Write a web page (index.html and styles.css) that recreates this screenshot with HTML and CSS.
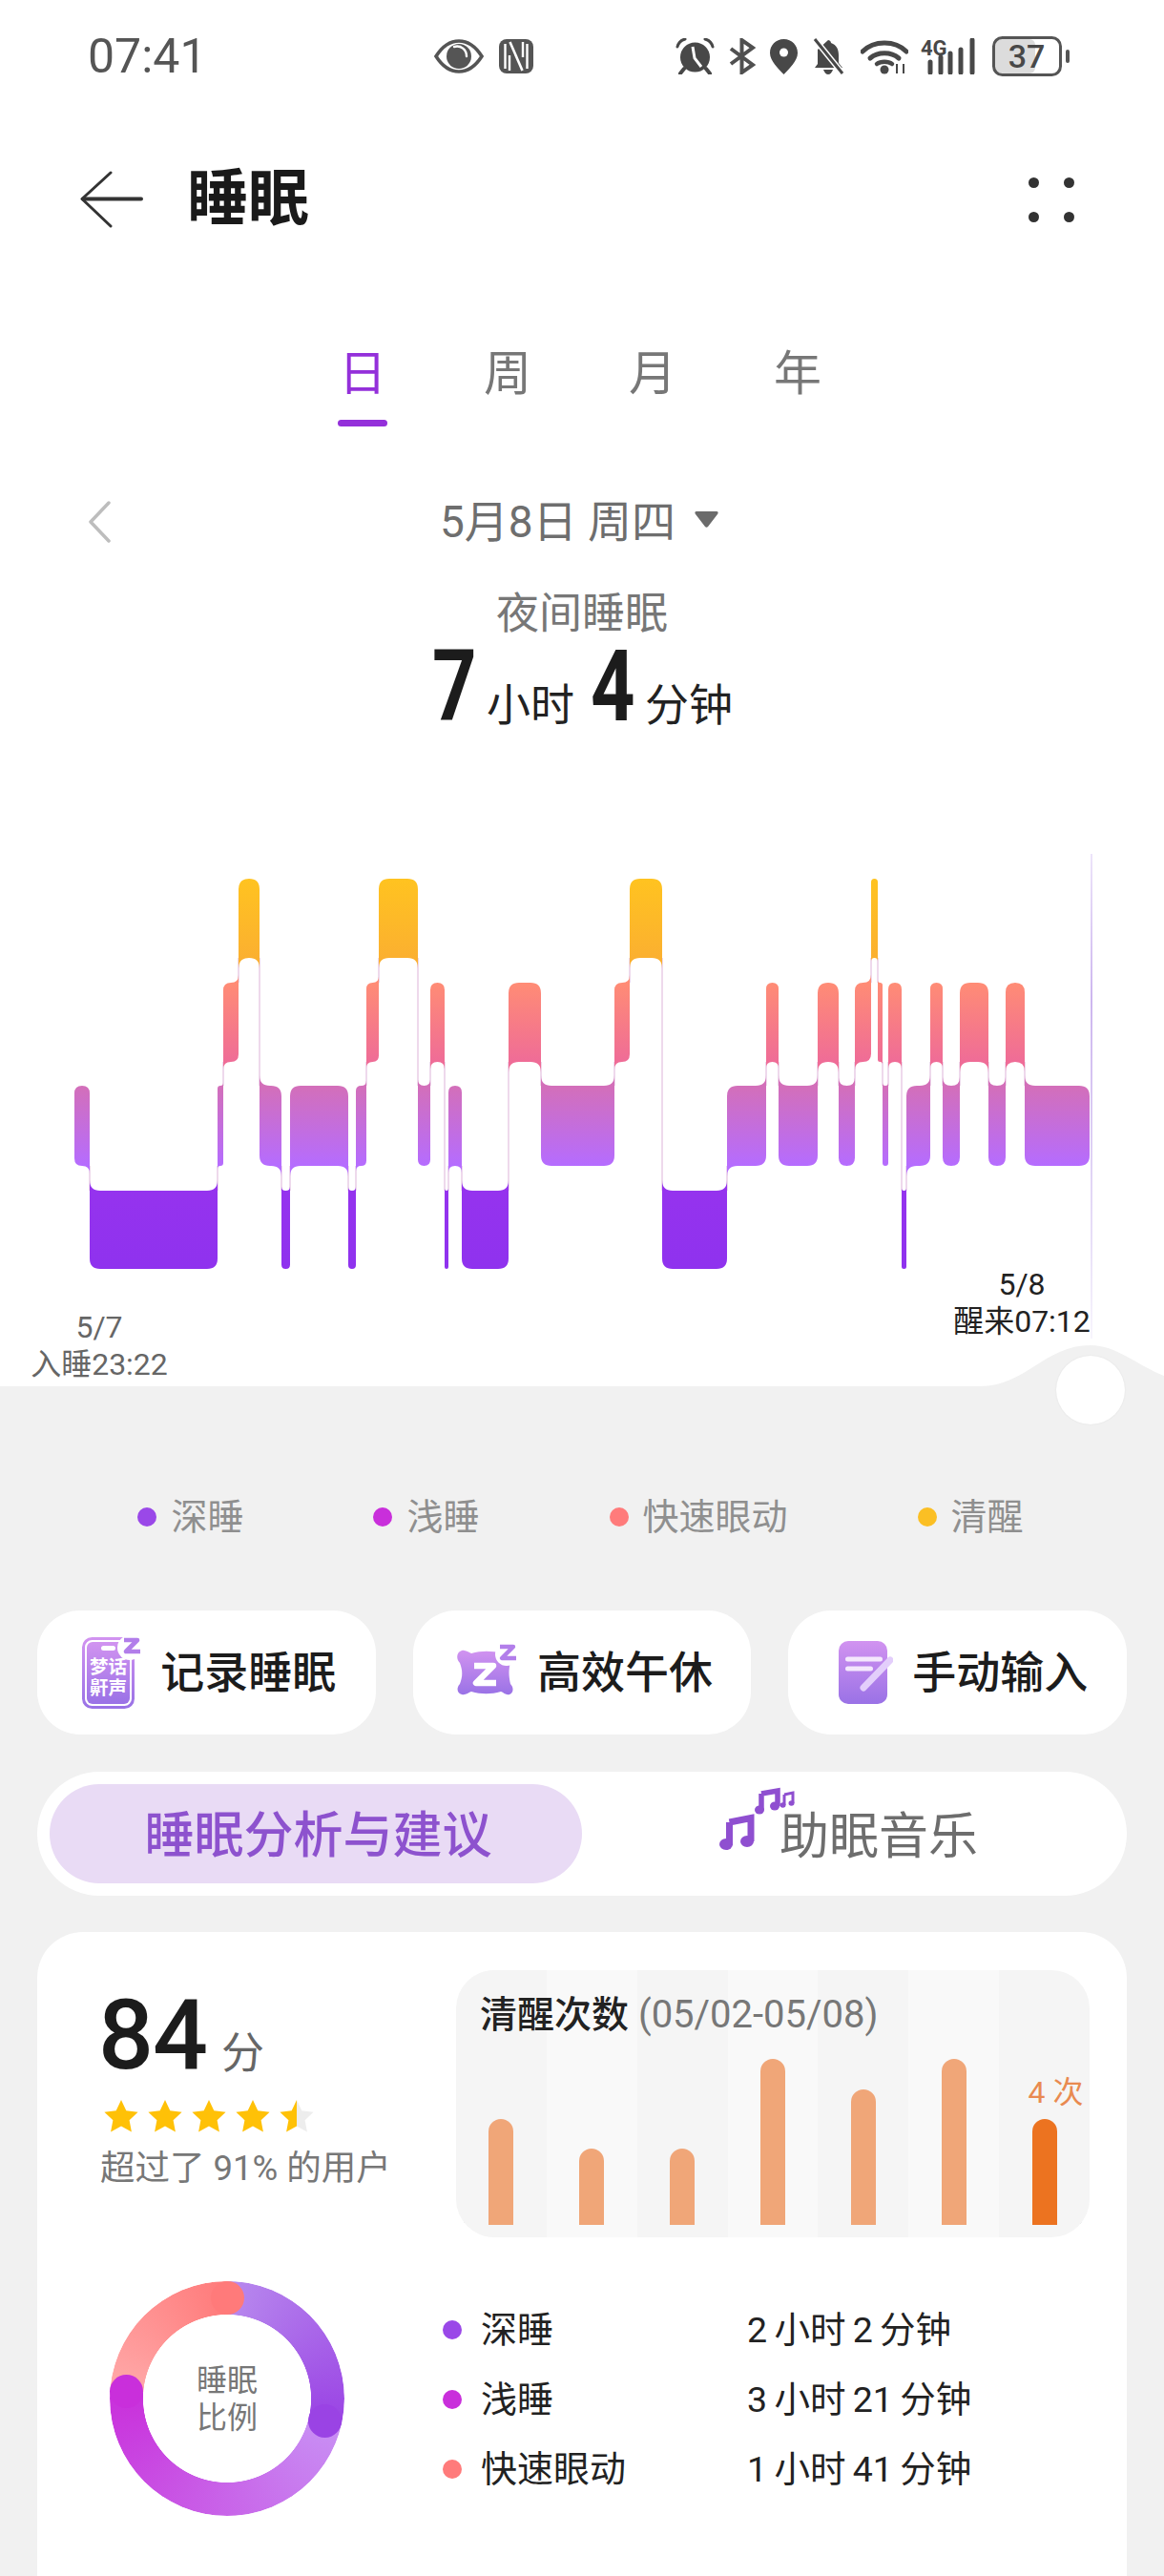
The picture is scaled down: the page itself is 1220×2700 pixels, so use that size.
FILE: index.html
```html
<!DOCTYPE html>
<html lang="zh-CN">
<head>
<meta charset="utf-8">
<title>睡眠</title>
<link rel="stylesheet" href="styles.css">
</head>
<body>
<div class="page">
  <section class="hero">
    <header class="statusbar">
      <span class="clock">07:41</span>
      <div class="status-mid">
        <svg class="ico" width="52" height="36" viewBox="0 0 52 36"><path d="M2 18C9 7 17 2 26 2s17 5 24 16c-7 11-15 16-24 16S9 29 2 18Z" fill="none" stroke="#555" stroke-width="3.6"/><circle cx="26" cy="18" r="13" fill="#555"/><path d="M21 8c7-2 13 3 13 10" fill="none" stroke="#fff" stroke-width="2.4" stroke-linecap="round"/></svg>
        <svg class="ico" width="36" height="36" viewBox="0 0 36 36"><rect x="0" y="0" width="36" height="36" rx="8" fill="#555"/><path d="M6.500 5v26M29.500 5v26" stroke="#fff" stroke-width="2.400"/><path d="M11.500 3 24.500 33" stroke="#fff" stroke-width="2.600"/><path d="M11 17v16M25 3v16" stroke="#fff" stroke-width="2.400"/></svg>
      </div>
      <div class="status-right">
        <svg class="ico" width="41" height="38" viewBox="0 0 41 38"><circle cx="20.500" cy="20" r="15.500" fill="#484848"/><path d="M18 9l2 12 7 9" fill="none" stroke="#fff" stroke-width="3"/><path d="M2 9c1-4 4-7 8-8M39 9c-1-4-4-7-8-8" fill="none" stroke="#484848" stroke-width="3" stroke-linecap="round"/><path d="M9 32l-4 5M32 32l4 5" stroke="#484848" stroke-width="4" stroke-linecap="round"/></svg>
        <svg class="ico" width="29" height="38" viewBox="0 0 29 38"><path d="M3 11l23 17-11.500 8V2L26 10 3 27" fill="none" stroke="#505050" stroke-width="4"/></svg>
        <svg class="ico" width="31" height="38" viewBox="0 0 31 38"><path d="M15.500 1C7 1 1 7.500 1 15.500 1 24 10 32 15.500 38 21 32 30 24 30 15.500 30 7.500 24 1 15.500 1Z" fill="#484848"/><circle cx="15.500" cy="15" r="4.500" fill="#fff"/></svg>
        <svg class="ico" width="35" height="38" viewBox="0 0 35 38"><path d="M17 2c1 0 3 1 3 3 6 2 8 7 8 13v8l4 5H3l3-4V12Z" fill="#484848"/><path d="M3 1l29 36" stroke="#fff" stroke-width="6"/><path d="M3 1l29 36" stroke="#484848" stroke-width="3"/><path d="M12 33h10c-1 3-3 5-5 5s-4-2-5-5Z" fill="#484848"/></svg>
        <svg class="ico ico-wifi" width="50" height="38" viewBox="0 0 50 38"><path d="M2 14C14 2 36 2 48 14" fill="none" stroke="#484848" stroke-width="5" stroke-linecap="round"/><path d="M10 21c8-7 22-7 30 0" fill="none" stroke="#484848" stroke-width="5" stroke-linecap="round"/><path d="M17 27c4-3 12-3 16 0" fill="none" stroke="#484848" stroke-width="4.500" stroke-linecap="round"/><circle cx="25" cy="33" r="4.500" fill="#484848"/><path d="M38 27v10M45 27v10" stroke="#484848" stroke-width="2"/></svg>
        <svg class="ico signal" width="60" height="38" viewBox="0 0 60 38"><text x="0" y="18" class="four-g">4G</text><path d="M10 25v11M21 20v16M31 16v20M42 12v24M54 2v34" stroke="#484848" stroke-width="5" stroke-linecap="round"/></svg>
        <svg class="ico" width="82" height="42" viewBox="0 0 82 42"><rect x="3" y="3" width="42" height="36" rx="6" fill="#dcdcdc"/><rect x="1.500" y="1.500" width="70" height="39" rx="9" fill="none" stroke="#555" stroke-width="3"/><text x="36" y="33" text-anchor="middle" class="batt">37</text><rect x="77" y="14" width="4" height="14" rx="2" fill="#555"/></svg>
      </div>
    </header>

    <nav class="navbar">
      <svg class="back" width="66" height="60" viewBox="0 0 66 60"><path d="M32 2 2 29.500 32 58" fill="none" stroke="#333" stroke-width="3" stroke-linecap="round" stroke-linejoin="round"/><path d="M3 29.500h61" stroke="#333" stroke-width="4" stroke-linecap="round"/></svg>
      <h1 class="title">睡眠</h1>
      <div class="more"><i></i><i></i><i></i><i></i></div>
    </nav>

    <div class="tabs">
      <span class="tab is-active">日</span>
      <span class="tab">周</span>
      <span class="tab">月</span>
      <span class="tab">年</span>
    </div>

    <div class="date-row">
      <svg class="prev" width="24" height="44" viewBox="0 0 24 44"><path d="M22 2 3 22l19 20" fill="none" stroke="#bdbdbd" stroke-width="3.500" stroke-linecap="round" stroke-linejoin="round"/></svg>
      <span class="date">5月8日 周四</span>
      <svg class="caret" width="25" height="17" viewBox="0 0 25 17"><path d="M2 0h21c2 0 2 2 1 3L14 16c-1 1-2 1-3 0L1 3C0 2 0 0 2 0Z" fill="#6b6b6b"/></svg>
    </div>

    <div class="night-label">夜间睡眠</div>
    <div class="night-total"><b class="big">7</b><span class="unit">小时</span><b class="big">4</b><span class="unit">分钟</span></div>

    <div class="hypno">
      <svg id="hypno-svg" width="1220" height="520" viewBox="0 890 1220 520"></svg>
      <div class="mark mark-start">5/7<br>入睡23:22</div>
      <div class="mark mark-end">5/8<br>醒来07:12</div>
    </div>

    <svg class="bump" width="1220" height="46" viewBox="0 1408 1220 46"><path d="M0 1453H1027C1075 1453 1095 1410 1143 1410C1170 1410 1190 1430 1220 1442V1454H0Z" fill="#f1f1f1"/></svg>
    <div class="knob"></div>
  </section>

  <main class="body">
    <div class="legend">
      <span class="legend-item"><i class="dot dot-deep"></i>深睡</span>
      <span class="legend-item"><i class="dot dot-light"></i>浅睡</span>
      <span class="legend-item"><i class="dot dot-rem"></i>快速眼动</span>
      <span class="legend-item"><i class="dot dot-wake"></i>清醒</span>
    </div>

    <div class="actions">
      <div class="action">
        <svg class="action-ico" width="62" height="75" viewBox="0 0 62 75">
          <defs><linearGradient id="ig1" x1="0" y1="0" x2="0" y2="1"><stop offset="0" stop-color="#D193F0"/><stop offset="1" stop-color="#9A72E6"/></linearGradient></defs>
          <rect x="1.500" y="1.500" width="52" height="72" rx="9" fill="none" stroke="url(#ig1)" stroke-width="3"/>
          <rect x="5" y="5" width="45" height="65" rx="6" fill="url(#ig1)"/>
          <rect x="20" y="9" width="15" height="5" rx="2.500" fill="#fff"/>
          <circle cx="50" cy="11" r="13" fill="#fff"/>
          <path d="M44 3h14L46 15h15" fill="none" stroke="#B27EEA" stroke-width="4.600" stroke-linejoin="round"/>
          <text class="ico-text" text-anchor="middle"><tspan x="27.500" y="38">梦话</tspan><tspan x="27.500" y="60">鼾声</tspan></text>
        </svg>
        <span class="action-text">记录睡眠</span>
      </div>
      <div class="action">
        <svg class="action-ico" width="66" height="60" viewBox="0 0 66 60">
          <defs><linearGradient id="ig2" x1="0" y1="0" x2="0" y2="1"><stop offset="0" stop-color="#D193F0"/><stop offset="1" stop-color="#9A72E6"/></linearGradient></defs>
          <path d="M8 7c4-1 7 2 10 3 10-3 22-3 32 0 3-1 5-3 8-2 4 2 5 7 1 11-2 8-2 14 0 23 4 4 3 10-1 11-4 1-6-2-9-3-10 3-21 3-31 0-3 1-6 4-10 3-5-1-6-7-2-11 3-8 3-14 0-22-4-4-4-11 2-13Z" fill="url(#ig2)"/>
          <path d="M21 23h20L23 41h21" fill="none" stroke="#fff" stroke-width="6.500" stroke-linejoin="round"/>
          <circle cx="55" cy="11" r="12" fill="#fff"/>
          <path d="M48 3h14L50 15h15" fill="none" stroke="#B27EEA" stroke-width="4.400" stroke-linejoin="round"/>
        </svg>
        <span class="action-text">高效午休</span>
      </div>
      <div class="action">
        <svg class="action-ico" width="57" height="66" viewBox="0 0 57 66">
          <defs><linearGradient id="ig3" x1="0" y1="0" x2="0" y2="1"><stop offset="0" stop-color="#D193F0"/><stop offset="1" stop-color="#9A72E6"/></linearGradient></defs>
          <rect x="0" y="0" width="51" height="66" rx="10" fill="url(#ig3)"/>
          <path d="M9.500 19h34M9.500 29h24" stroke="#F4E8FD" stroke-width="5" stroke-linecap="round"/>
          <path d="M26 49 54 20" stroke="#E3CEFB" stroke-width="7" stroke-linecap="round"/>
        </svg>
        <span class="action-text">手动输入</span>
      </div>
    </div>

    <div class="switch">
      <div class="switch-on">睡眠分析与建议</div>
      <div class="switch-off">
        <svg class="music" width="80" height="68" viewBox="0 0 80 68">
          <path d="M10.500 39 33 34.500V59M10.500 39V63" fill="none" stroke="#8F4FD0" stroke-width="7"/>
          <ellipse cx="7" cy="62" rx="7" ry="6" fill="#8F4FD0"/>
          <ellipse cx="29" cy="59" rx="7" ry="6" fill="#8F4FD0"/>
          <path d="M44 9 61 6V22M44 9V26" fill="none" stroke="#8F4FD0" stroke-width="5.500"/>
          <ellipse cx="42" cy="26" rx="5" ry="4.500" fill="#8F4FD0"/>
          <ellipse cx="58" cy="22" rx="5" ry="4.500" fill="#8F4FD0"/>
          <path d="M68 10 77 8V19M68 10V21" fill="none" stroke="#8F4FD0" stroke-width="3"/>
          <ellipse cx="66.500" cy="21" rx="3" ry="2.700" fill="#8F4FD0"/>
          <ellipse cx="75.500" cy="19" rx="3" ry="2.700" fill="#8F4FD0"/>
        </svg>
        <span>助眠音乐</span>
      </div>
    </div>

    <article class="card">
      <div class="card-top">
        <div class="score">
          <div class="score-line"><b class="score-num">84</b><span class="score-unit">分</span></div>
          <svg class="stars" width="222" height="34" viewBox="0 0 222 34">
            <defs>
              <path id="star" d="M18 0l5.300 11.200 12.300 1.500-9 8.500 2.300 12.200L18 27.400 7.100 33.400 9.400 21.200l-9-8.500 12.300-1.500Z"/>
              <linearGradient id="half"><stop offset=".5" stop-color="#FFC107"/><stop offset=".5" stop-color="#EDEDED"/></linearGradient>
            </defs>
            <use href="#star" fill="#FFC107"/>
            <use href="#star" x="46" fill="#FFC107"/>
            <use href="#star" x="92" fill="#FFC107"/>
            <use href="#star" x="138" fill="#FFC107"/>
            <use href="#star" x="184" fill="url(#half)"/>
          </svg>
          <p class="score-note">超过了 91% 的用户</p>
        </div>
        <div class="wakes">
          <div class="wakes-title"><b>清醒次数</b> <span>(05/02-05/08)</span></div>
          <div class="wakes-base"></div>
          <div class="wakes-col"><i class="bar" style="height:111px"></i></div>
          <div class="wakes-col"><i class="bar" style="height:80px"></i></div>
          <div class="wakes-col"><i class="bar" style="height:80px"></i></div>
          <div class="wakes-col"><i class="bar" style="height:174px"></i></div>
          <div class="wakes-col"><i class="bar" style="height:142px"></i></div>
          <div class="wakes-col"><i class="bar" style="height:174px"></i></div>
          <div class="wakes-col"><em class="wakes-now">4 次</em><i class="bar bar-now" style="height:111px"></i></div>
        </div>
      </div>
      <div class="card-bottom">
        <div class="donut-wrap">
          <div class="donut"></div>
          <i class="cap cap-rem"></i>
          <i class="cap cap-deep"></i>
          <i class="cap cap-light"></i>
          <div class="donut-text">睡眠<br>比例</div>
        </div>
        <ul class="stages">
          <li><i class="dot dot-deep"></i><span class="stage-name">深睡</span><span class="stage-time">2 小时 2 分钟</span></li>
          <li><i class="dot dot-light"></i><span class="stage-name">浅睡</span><span class="stage-time">3 小时 21 分钟</span></li>
          <li><i class="dot dot-rem"></i><span class="stage-name">快速眼动</span><span class="stage-time">1 小时 41 分钟</span></li>
        </ul>
      </div>
    </article>
  </main>
</div>
<script src="chart.js"></script>
</body>
</html>
```

FILE: styles.css
```css
* { box-sizing: border-box; }
html, body { margin: 0; padding: 0; background: #f1f1f1; }
body { font-family: Roboto, "Noto Sans CJK SC", sans-serif; color: #1c1c1c; }
.page { width: 1220px; height: 2700px; overflow: hidden; }
p, h1, ul { margin: 0; padding: 0; }
i, em { font-style: normal; }

.hero { position: relative; height: 1454px; background: #fff; }

.statusbar { height: 118px; padding: 0 0 0 92px; display: flex; align-items: center; }
.clock { width: 363px; font-size: 50px; line-height: 1; color: #555; letter-spacing: 0; }
.status-mid { display: flex; gap: 16px; width: 253px; align-items: center; }
.status-right { display: flex; align-items: center; gap: 14px; }
.ico { display: block; }
.ico-wifi { margin-left: 2px; }
.signal { margin-left: -1px; margin-right: 1px; }
.four-g { font: 700 22px Roboto, sans-serif; fill: #484848; }
.batt { font: 500 34px Roboto, sans-serif; fill: #484848; }

.navbar { position: relative; height: 120px; margin-top: 31px; padding: 0 84px; display: flex; align-items: center; }
.back { display: block; }
.title { margin-left: 46px; font-size: 64px; line-height: 1; font-weight: 700; color: #1a1a1a; letter-spacing: 0; }
.more { margin-left: auto; margin-right: 10px; width: 48px; display: grid; grid-template-columns: 11px 11px; justify-content: space-between; row-gap: 25px; }
.more i { height: 11px; border-radius: 50%; background: #333; }

.tabs { height: 97px; margin-top: 81px; display: flex; justify-content: center; transform: translateX(-2px); }
.tab { position: relative; width: 152px; text-align: center; font-size: 50px; line-height: 84px; color: #777; }
.tab.is-active { color: #9430DA; }
.tab.is-active::after { content: ""; position: absolute; left: 50%; bottom: 0; width: 52px; height: 7px; margin-left: -26px; border-radius: 4px; background: #9430DA; }

.date-row { position: relative; height: 50px; margin-top: 75px; display: flex; align-items: center; justify-content: center; padding-right: 6px; gap: 20px; }
.prev { position: absolute; left: 92px; top: 3px; }
.date { font-size: 46px; line-height: 50px; color: #6e6e6e; }
.caret { margin-top: -6px; }

.night-label { margin-top: 42px; height: 60px; text-align: center; font-size: 45px; line-height: 60px; color: #777; }
.night-total { height: 90px; margin-top: 1px; display: flex; align-items: baseline; justify-content: center; padding-left: 8px; line-height: 90px; }
.big { display: inline-block; font-size: 104px; font-weight: 700; color: #1c1c1c; transform: scaleX(.78); width: 46px; text-align: center; }
.unit { font-size: 46px; margin: 0 12px 0 16px; color: #222; }

.hypno { position: absolute; left: 0; top: 890px; width: 1220px; height: 520px; }
#hypno-svg { display: block; }
.mark { position: absolute; width: 180px; text-align: center; font-size: 32px; line-height: 39px; }
.mark-start { left: 14px; top: 482px; color: #666; }
.mark-end { left: 981px; top: 437px; color: #222; }

.bump { position: absolute; left: 0; bottom: 0; display: block; }
.knob { position: absolute; left: 1107px; top: 1421px; width: 72px; height: 72px; border-radius: 50%; background: #fff; box-shadow: 0 0 2px rgba(0,0,0,.08); z-index: 2; }

.body { padding: 111px 39px 0; }
.legend { height: 50px; display: flex; justify-content: center; gap: 136px; padding-right: 3px; }
.legend-item { display: flex; align-items: center; gap: 15px; font-size: 38px; line-height: 50px; color: #8f8f8f; }
.dot { flex: none; display: block; width: 20px; height: 20px; border-radius: 50%; }
.dot-deep { background: #9A48E8; }
.dot-light { background: #C92FDB; }
.dot-rem { background: #FF7B7B; }
.dot-wake { background: #FBBF24; }

.actions { margin-top: 73px; display: grid; grid-template-columns: repeat(3, 1fr); gap: 39px; }
.action { height: 130px; border-radius: 45px; background: #fff; display: flex; align-items: center; justify-content: center; gap: 20px; padding-left: 6px; }
.action:nth-child(2) { padding-left: 3px; gap: 21px; }
.action:nth-child(3) { padding-left: 12px; }
.action-ico { display: block; flex: none; }
.ico-text { font: 700 19.500px "Noto Sans CJK SC", sans-serif; fill: #fff; }
.action-text { font-size: 46px; line-height: 60px; font-weight: 500; color: #1c1c1c; }

.switch { margin-top: 39px; height: 130px; border-radius: 65px; background: #fff; padding: 13px; display: flex; }
.switch-on { width: 558px; height: 104px; border-radius: 52px; background: #E9DBF5; padding-left: 5px; text-align: center; font-size: 52px; line-height: 110px; font-weight: 500; color: #8D52CE; }
.switch-off { position: relative; flex: 1; display: flex; align-items: center; padding-left: 207px; padding-top: 8px; font-size: 52px; line-height: 102px; color: #6d6d6d; }
.music { position: absolute; left: 144px; top: 1px; display: block; }

.card { margin-top: 38px; height: 800px; border-radius: 48px; background: #fff; padding: 40px 39px 0 69px; }
.card-top { display: flex; height: 280px; justify-content: space-between; }
.score { width: 330px; }
.score-line { height: 110px; margin-left: -5px; padding-top: 13px; display: flex; align-items: baseline; line-height: 110px; }
.score-num { font-size: 102px; font-weight: 500; color: #1c1c1c; letter-spacing: -1px; }
.score-unit { margin-left: 15px; font-size: 45px; color: #666; }
.stars { display: block; margin: 26px 0 0 1px; }
.score-note { margin-top: 16px; font-size: 36.500px; line-height: 44px; color: #777; white-space: nowrap; margin-left: -3px; }

.wakes { position: relative; width: 664px; height: 280px; border-radius: 40px; overflow: hidden; display: grid; grid-template-columns: repeat(7, 1fr); }
.wakes-title { position: absolute; left: 25px; top: 24px; font-size: 40px; line-height: 46px; color: #777; white-space: nowrap; z-index: 1; }
.wakes-title b { font-size: 39px; font-weight: 500; color: #222; }
.wakes-base { position: absolute; left: 7px; right: 8px; top: 264px; border-top: 2px dotted #cfcfcf; }
.wakes-col { position: relative; display: flex; flex-direction: column; align-items: center; justify-content: flex-end; padding-bottom: 13px; background: #f5f5f5; }
.wakes-col:nth-of-type(even) { background: #f9f9f9; }
.bar { display: block; width: 26px; border-radius: 13px 13px 0 0; background: #F0A678; }
.bar-now { background: #EC7320; }
.wakes-now { margin-bottom: 9px; margin-left: 24px; font-size: 32px; line-height: 38px; color: #E98A50; white-space: nowrap; }

.card-bottom { display: flex; margin-top: 46px; margin-left: 7px; }
.donut-wrap { position: relative; flex: none; width: 246px; height: 246px; }
.donut { width: 246px; height: 246px; border-radius: 50%; background: conic-gradient(#B88AEE 0deg, #9A43E4 103deg, #C890F4 103deg, #C92FDB 274deg, #FFA9A9 274deg, #FF7A7A 360deg); -webkit-mask: radial-gradient(closest-side, transparent 71.3%, #000 71.8%); mask: radial-gradient(closest-side, transparent 71.3%, #000 71.8%); }
.cap { position: absolute; width: 35px; height: 35px; margin: -17.500px 0 0 -17.500px; border-radius: 50%; }
.cap-rem { left: 123px; top: 17.500px; background: #FF7A7A; }
.cap-deep { left: 225.800px; top: 146.700px; background: #9A43E4; }
.cap-light { left: 17.800px; top: 115.600px; background: #C92FDB; }
.donut-text { position: absolute; inset: 2px 0 0; display: flex; align-items: center; justify-content: center; text-align: center; font-size: 32px; line-height: 39px; color: #777; }

.stages { list-style: none; margin-left: 103px; padding-top: 14px; }
.stages li { height: 73px; display: flex; align-items: center; font-size: 38px; line-height: 46px; color: #222; white-space: nowrap; }
.stages .dot { margin-right: 20px; }
.stage-name { width: 279px; }
.stage-time { word-spacing: -2px; font-size: 37.500px; }
```

FILE: chart.js
```js
// Sleep stages across the night: [stage, x start, x end]. 0 deep, 1 light, 2 REM, 3 awake.
var SEGMENTS = [
  [1,78,94],[0,94,228],[1,228,234],[2,234,250],[3,250,272],[1,272,295],[0,295,304],[1,304,365],
  [0,365,373],[1,373,384],[2,384,397],[3,397,438],[1,438,451],[2,451,466],[0,466,470],[1,470,484],
  [0,484,533],[2,533,567],[1,567,644],[2,644,660],[3,660,694],[0,694,762],[1,762,803],[2,803,816],
  [1,816,857],[2,857,879],[1,879,896],[2,896,913],[3,913,920],[2,920,925],[1,925,931],[2,931,945],
  [0,945,950],[1,950,975],[2,975,988],[1,988,1006],[2,1006,1036],[1,1036,1054],[2,1054,1074],[1,1074,1142]
];
var BANDS = [
  { top: 1248, bottom: 1330, from: "#9533EE", to: "#8F32EE" },
  { top: 1138, bottom: 1222, from: "#D36FB9", to: "#B56CFF" },
  { top: 1030, bottom: 1113, from: "#FF8C75", to: "#EF6C97" },
  { top: 921,  bottom: 1004, from: "#FFC320", to: "#FBB030" }
];

function segmentPath(i) {
  var s = SEGMENTS[i], prev = SEGMENTS[i - 1], next = SEGMENTS[i + 1];
  var b = BANDS[s[0]], x0 = s[1], x1 = s[2], t = b.top, y = b.bottom;
  var w = x1 - x0, r = Math.min(11, w / 2), f = Math.min(11, w / 2);
  var prevHigh = prev && prev[0] > s[0], prevLow = prev && prev[0] < s[0];
  var nextHigh = next && next[0] > s[0], nextLow = next && next[0] < s[0];
  var d = "";
  d += prevHigh ? "M" + x0 + " " + (t - f) + "Q" + x0 + " " + t + " " + (x0 + f) + " " + t
                : "M" + x0 + " " + (t + r) + "Q" + x0 + " " + t + " " + (x0 + r) + " " + t;
  d += nextHigh ? "L" + (x1 - f) + " " + t + "Q" + x1 + " " + t + " " + x1 + " " + (t - f)
                : "L" + (x1 - r) + " " + t + "Q" + x1 + " " + t + " " + x1 + " " + (t + r);
  d += nextLow ? "L" + x1 + " " + (y + f) + "Q" + x1 + " " + y + " " + (x1 - f) + " " + y
               : "L" + x1 + " " + (y - r) + "Q" + x1 + " " + y + " " + (x1 - r) + " " + y;
  d += prevLow ? "L" + (x0 + f) + " " + y + "Q" + x0 + " " + y + " " + x0 + " " + (y + f)
               : "L" + (x0 + r) + " " + y + "Q" + x0 + " " + y + " " + x0 + " " + (y - r);
  return d + "Z";
}

function buildChart() {
  var svg = document.getElementById("hypno-svg");
  var html = "<defs>";
  BANDS.forEach(function (b, n) {
    html += '<linearGradient id="band' + n + '" gradientUnits="userSpaceOnUse" x1="0" x2="0" y1="' + b.top + '" y2="' + b.bottom + '">' +
            '<stop offset="0" stop-color="' + b.from + '"/><stop offset="1" stop-color="' + b.to + '"/></linearGradient>';
  });
  html += '<linearGradient id="endline" x1="0" x2="0" y1="0" y2="1"><stop offset="0" stop-color="#EDE4FA"/>' +
          '<stop offset=".3" stop-color="#CDB6EF"/><stop offset=".8" stop-color="#E8DFF8"/><stop offset="1" stop-color="#F8F5FD"/></linearGradient></defs>';
  html += '<rect x="1143" y="895" width="2" height="508" fill="url(#endline)"/>';
  SEGMENTS.forEach(function (s, i) {
    var next = SEGMENTS[i + 1];
    if (next) {
      var hi = Math.max(s[0], next[0]), lo = Math.min(s[0], next[0]);
      var y0 = BANDS[hi].bottom, y1 = BANDS[lo].top;
      html += '<rect x="' + (s[2] - 0.75) + '" y="' + y0 + '" width="1.5" height="' + (y1 - y0) + '" fill="#E9CDE6"/>';
    }
  });
  SEGMENTS.forEach(function (s, i) {
    html += '<path d="' + segmentPath(i) + '" fill="url(#band' + s[0] + ')"/>';
  });
  svg.innerHTML = html;
}
buildChart();
```
